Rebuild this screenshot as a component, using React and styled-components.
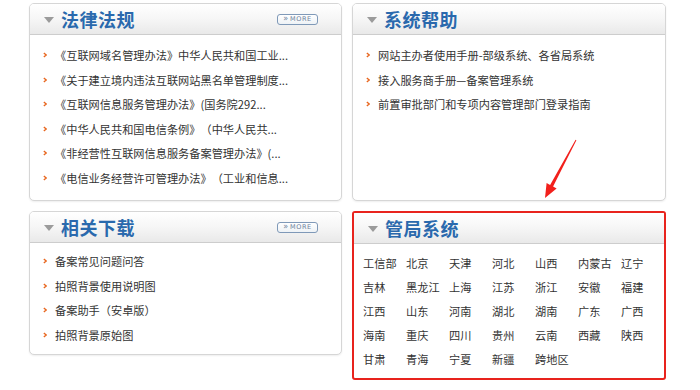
import React from 'react';
import styled, { createGlobalStyle } from 'styled-components';

const Global = createGlobalStyle`
  html, body { margin: 0; padding: 0; background: #fff; }
  body {
    font-family: "Noto Sans CJK SC", "Noto Sans", sans-serif;
    text-spacing-trim: space-all;
  }
`;

const Page = styled.div`
  position: relative;
  width: 700px;
  height: 390px;
  box-sizing: border-box;
  padding: 3px 0 0 29px;
  display: grid;
  grid-template-columns: 313px 314px;
  grid-template-rows: 198px auto;
  column-gap: 10px;
  row-gap: 10px;
`;

const Panel = styled.section`
  box-sizing: border-box;
  border: ${(p) => (p.$highlight ? '2px solid #e8231d' : '1px solid #d6d6d6')};
  border-radius: ${(p) => (p.$highlight ? '3px' : '5px')};
  background: #fff;
  box-shadow: ${(p) => (p.$highlight ? 'none' : '0 1px 2px rgba(0,0,0,0.07)')};
  overflow: hidden;
  align-self: ${(p) => (p.$start ? 'start' : 'stretch')};
  display: flex;
  flex-direction: column;
`;

const Header = styled.div`
  height: 30px;
  flex: none;
  display: flex;
  align-items: center;
  padding: 0 14px;
  background: linear-gradient(#ffffff 0%, #f6f6f6 50%, #e9e9e9 100%);
  border-bottom: 1px solid #cdcdcd;
`;

const Caret = styled.span`
  width: 0;
  height: 0;
  border-left: 5px solid transparent;
  border-right: 5px solid transparent;
  border-top: 6px solid #9b9b9b;
  margin: 2px 7px 0 0;
`;

const Title = styled.h2`
  margin: 0;
  font-size: 18px;
  font-weight: 700;
  color: #2a69ad;
  letter-spacing: 0.5px;
  line-height: 1;
`;

const More = styled.span`
  margin-left: auto;
  margin-right: 9px;
  width: 41px;
  height: 11px;
  box-sizing: border-box;
  border: 1px solid #7f99b8;
  border-radius: 3px;
  background: linear-gradient(#ffffff, #eef2f6);
  display: flex;
  align-items: center;
  justify-content: center;
  gap: 3px;
  font-family: "DejaVu Sans", "Liberation Sans", sans-serif;
  font-size: 6.5px;
  letter-spacing: 0.6px;
  color: #6d829c;
  line-height: 1;
`;

const MoreMark = styled.span`
  font-size: 8px;
  letter-spacing: -1px;
  margin-top: -1px;
`;

const List = styled.ul`
  list-style: none;
  margin: 0;
  padding: ${(p) => p.$pad || '8px 0 10px'};
`;

const Item = styled.li`
  height: 24.5px;
  display: flex;
  align-items: center;
  padding-left: 13px;
  font-size: 11.2px;
  color: #333;
  white-space: nowrap;
`;

const Bullet = styled.svg`
  width: 4px;
  height: 6px;
  flex: none;
  margin-right: 8px;
`;

const CityGrid = styled.div`
  display: grid;
  grid-template-columns: repeat(7, 43px);
  grid-auto-rows: 24px;
  align-items: center;
  padding: 7px 0 7px 9px;
  font-size: 11.2px;
  color: #333;
`;

const City = styled.span`
  white-space: nowrap;
`;

const Annotation = styled.svg`
  position: absolute;
  left: 0;
  top: 0;
  width: 700px;
  height: 390px;
  pointer-events: none;
`;

const Arrow = () => (
  <Bullet viewBox="0 0 4 6">
    <path d="M0.8 1 L3.2 3 L0.8 5" fill="none" stroke="#e8661e" strokeWidth="1.3" />
  </Bullet>
);

const LinkList = ({ items, pad }) => (
  <List $pad={pad}>
    {items.map((t) => (
      <Item key={t}>
        <Arrow />
        {t}
      </Item>
    ))}
  </List>
);

const Head = ({ title, more }) => (
  <Header>
    <Caret />
    <Title>{title}</Title>
    {more && (
      <More>
        <MoreMark>»</MoreMark>MORE
      </More>
    )}
  </Header>
);

const laws = [
  '《互联网域名管理办法》中华人民共和国工业...',
  '《关于建立境内违法互联网站黑名单管理制度...',
  '《互联网信息服务管理办法》(国务院292...',
  '《中华人民共和国电信条例》（中华人民共...',
  '《非经营性互联网信息服务备案管理办法》(...',
  '《电信业务经营许可管理办法》（工业和信息...',
];

const helps = [
  '网站主办者使用手册-部级系统、各省局系统',
  '接入服务商手册—备案管理系统',
  '前置审批部门和专项内容管理部门登录指南',
];

const downloads = ['备案常见问题问答', '拍照背景使用说明图', '备案助手（安卓版）', '拍照背景原始图'];

const cities = [
  '工信部', '北京', '天津', '河北', '山西', '内蒙古', '辽宁',
  '吉林', '黑龙江', '上海', '江苏', '浙江', '安徽', '福建',
  '江西', '山东', '河南', '湖北', '湖南', '广东', '广西',
  '海南', '重庆', '四川', '贵州', '云南', '西藏', '陕西',
  '甘肃', '青海', '宁夏', '新疆', '跨地区',
];

export default function App() {
  return (
    <>
      <Global />
      <Page>
        <Panel>
          <Head title="法律法规" more />
          <LinkList items={laws} />
        </Panel>
        <Panel>
          <Head title="系统帮助" />
          <LinkList items={helps} />
        </Panel>
        <Panel $start>
          <Head title="相关下载" more />
          <LinkList items={downloads} pad="6px 0 7px" />
        </Panel>
        <Panel $start $highlight>
          <Head title="管局系统" />
          <CityGrid>
            {cities.map((c) => (
              <City key={c}>{c}</City>
            ))}
          </CityGrid>
        </Panel>
        <Annotation viewBox="0 0 700 390">
          <polygon
            points="576.4,140.2 553.1,186.5 556.6,188.4 545,198 546.6,183 550.1,184.9 575.6,139.8"
            fill="#f2201c"
          />
        </Annotation>
      </Page>
    </>
  );
}
